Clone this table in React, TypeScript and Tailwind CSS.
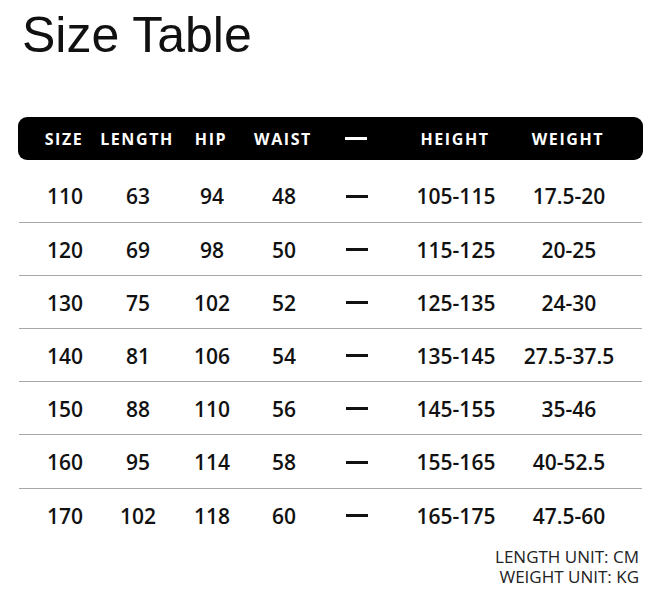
const HEADERS = ["SIZE", "LENGTH", "HIP", "WAIST", "—", "HEIGHT", "WEIGHT"];

const ROWS: Array<[string, string, string, string, string, string]> = [
  ["110", "63", "94", "48", "105-115", "17.5-20"],
  ["120", "69", "98", "50", "115-125", "20-25"],
  ["130", "75", "102", "52", "125-135", "24-30"],
  ["140", "81", "106", "54", "135-145", "27.5-37.5"],
  ["150", "88", "110", "56", "145-155", "35-46"],
  ["160", "95", "114", "58", "155-165", "40-52.5"],
  ["170", "102", "118", "60", "165-175", "47.5-60"]
];

const GRID = "grid grid-cols-[92px_54px_94px_50px_96px_102px_124px]";

function Dash({ light = false }: { light?: boolean }) {
  return (
    <span
      className={
        light
          ? "block h-[3px] w-[22px] bg-white"
          : "block h-[3px] w-[22px] -translate-y-[1px] bg-[#111]"
      }
    />
  );
}

export default function App() {
  return (
    <div className="h-[600px] w-[660px] bg-white font-['Open_Sans',sans-serif] text-[#111]">
      <h1 className="ml-[22px] pt-[10px] font-['Liberation_Sans',Arial,sans-serif] text-[50px] leading-[50px] font-normal text-[#111]">
        Size Table
      </h1>

      <div className="ml-[18px] mt-[57px] w-[625px]">
        <div className={`${GRID} h-[43px] items-center rounded-[9px] bg-black text-[16px] font-bold tracking-[1.6px] text-white`}>
          {HEADERS.map((label) => (
            <div key={label} className="flex justify-center">
              {label === "—" ? <Dash light /> : <span className="whitespace-nowrap">{label}</span>}
            </div>
          ))}
        </div>

        <div className="mt-[9.5px]">
          {ROWS.map((row, index) => (
            <div
              key={row[0]}
              className={`${GRID} mx-[1px] h-[53.2px] items-center pt-[3px] text-[21px] font-semibold ${
                index < ROWS.length - 1 ? "border-b border-[#a8a8a8]" : ""
              }`}
            >
              <div className="flex justify-center">{row[0]}</div>
              <div className="flex justify-center">{row[1]}</div>
              <div className="flex justify-center">{row[2]}</div>
              <div className="flex justify-center">{row[3]}</div>
              <div className="flex justify-center">
                <Dash />
              </div>
              <div className="flex justify-center whitespace-nowrap">{row[4]}</div>
              <div className="flex justify-center whitespace-nowrap">{row[5]}</div>
            </div>
          ))}
        </div>

        <div className="mt-[5px] mr-[4px] text-right text-[17px] leading-[20px] text-[#222]">
          <div>LENGTH UNIT: CM</div>
          <div>WEIGHT UNIT: KG</div>
        </div>
      </div>
    </div>
  );
}
